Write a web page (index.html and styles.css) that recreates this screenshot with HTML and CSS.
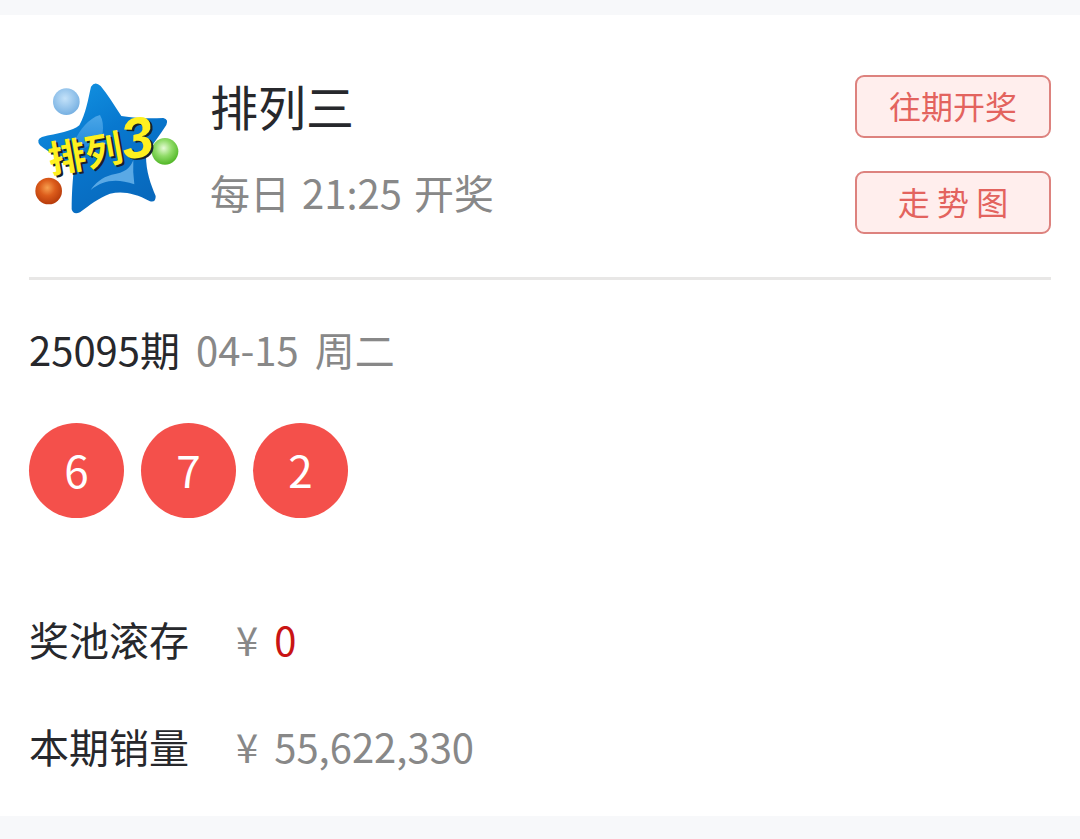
FILE: index.html
```
<!DOCTYPE html>
<html lang="zh">
<head>
    <meta charset="UTF-8">
    <meta name="viewport" content="width=device-width, initial-scale=1.0">
    <title>排列三</title>
    <link rel="stylesheet" href="styles.css">
</head>
<body>
    <main class="card">
        <header class="header">
            <svg class="logo" viewBox="27 0 456 465" aria-hidden="true">
                <defs>
                    <linearGradient id="star" x1="0" y1="0" x2="0.6" y2="1">
                        <stop offset="0" stop-color="#1599e6"/>
                        <stop offset="0.5" stop-color="#0878cf"/>
                        <stop offset="1" stop-color="#0869bd"/>
                    </linearGradient>
                    <linearGradient id="shine" x1="0" y1="0" x2="0" y2="1">
                        <stop offset="0" stop-color="#4ba6e8"/>
                        <stop offset="1" stop-color="#1683d6"/>
                    </linearGradient>
                    <radialGradient id="blue" cx="0.45" cy="0.38" r="0.6">
                        <stop offset="0" stop-color="#c4e2f9"/>
                        <stop offset="1" stop-color="#79b2e3"/>
                    </radialGradient>
                    <radialGradient id="green" cx="0.45" cy="0.38" r="0.6">
                        <stop offset="0" stop-color="#e6fbd6"/>
                        <stop offset="0.5" stop-color="#91dc69"/>
                        <stop offset="1" stop-color="#55b92b"/>
                    </radialGradient>
                    <radialGradient id="orange" cx="0.45" cy="0.38" r="0.6">
                        <stop offset="0" stop-color="#f7a04f"/>
                        <stop offset="0.5" stop-color="#dc5c1b"/>
                        <stop offset="1" stop-color="#b93d0c"/>
                    </radialGradient>
                </defs>
                <path fill="url(#star)" d="M213 50Q225 32 242 48C262 72 282 104 304 138C350 146 392 146 430 144Q447 148 439 165C420 196 396 224 378 256C378 306 392 342 407 378Q408 398 390 394C344 370 310 363 270 371C236 384 207 406 180 427Q160 436 155 418C155 370 158 330 162 294C130 270 90 250 60 226Q47 208 66 201C110 190 160 184 178 166C198 130 204 88 213 50Z"/>
                <path fill="url(#shine)" d="M240 135C205 145 180 180 165 210L150 260C180 240 225 225 248 190Q252 155 240 135Z"/>
                <path fill="#5aa9e5" d="M340 270C330 295 315 308 275 314C245 322 225 340 212 360C250 330 290 325 343 343Q338 305 340 270Z"/>
                <circle cx="139" cy="95" r="40" fill="url(#blue)"/>
                <circle cx="435" cy="244" r="40" fill="url(#green)"/>
                <circle cx="86" cy="363" r="40" fill="url(#orange)"/>
                <g transform="rotate(-10 240 230)">
                    <g class="logo-shadow">
                        <text class="logo-text" x="87" y="290">排列</text>
                        <text class="logo-number" x="312" y="288">3</text>
                    </g>
                    <g class="logo-front">
                        <text class="logo-text" x="81" y="284">排列</text>
                        <text class="logo-number" x="306" y="282">3</text>
                    </g>
                </g>
            </svg>
            <div class="intro">
                <h1>排列三</h1>
                <p><span>每日</span> <time>21:25</time> <span>开奖</span></p>
            </div>
            <nav class="actions">
                <button type="button">往期开奖</button>
                <button type="button">走 势 图</button>
            </nav>
        </header>

        <section class="draw">
            <h2>25095期 <time>04-15</time> <span>周二</span></h2>
            <ul class="balls">
                <li>6</li>
                <li>7</li>
                <li>2</li>
            </ul>
        </section>

        <dl class="totals">
            <dt>奖池滚存</dt>
            <dd><span>¥</span><strong>0</strong></dd>
            <dt>本期销量</dt>
            <dd><span>¥</span>55,622,330</dd>
        </dl>
    </main>
</body>
</html>
```

FILE: styles.css
```
* {
    box-sizing: border-box;
}
body {
    margin: 0;
    padding: 15px 0 23px;
    background-color: #f7f8fa;
    color: #27282c;
    font-family: "KaiTi", "STKaiti", "Noto Sans CJK SC", sans-serif;
    font-size: 40px;
    line-height: 60px;
}
h1, h2, p, ul, dl, dd {
    margin: 0;
    padding: 0;
    font-weight: inherit;
}
.card {
    background-color: #fff;
    padding: 52px 29px 40px;
}
.header {
    display: flex;
    align-items: flex-start;
    padding-bottom: 43px;
    border-bottom: 3px solid #e8e7e6;
}
.logo {
    width: 152px;
    height: 155px;
    margin-top: 3px;
    flex-shrink: 0;
}
.logo-text {
    font-family: "Noto Sans CJK SC", sans-serif;
    font-size: 112px;
    font-weight: 700;
}
.logo-number {
    font-family: "Liberation Sans", Arial, sans-serif;
    font-size: 172px;
    font-weight: bold;
    font-style: italic;
}
.logo-shadow {
    fill: #17212b;
}
.logo-front {
    fill: #fff01f;
}
.intro {
    flex: 1;
    padding-left: 29px;
    color: #888;
}
.intro h1 {
    margin: 2px 0 21px;
    color: #27282c;
    font-size: 48px;
    line-height: 72px;
}
.intro p {
    display: flex;
    gap: 12px;
}
.actions {
    display: flex;
    flex-direction: column;
    gap: 33px;
    width: 196px;
    padding-top: 8px;
}
.actions button {
    height: 63px;
    padding: 0 0 3px;
    border: 2px solid #dd827e;
    border-radius: 9px;
    background-color: #ffeeed;
    color: #e3635e;
    font-family: "Noto Sans CJK SC", sans-serif;
    font-size: 32px;
    cursor: pointer;
}
.draw {
    padding-top: 39px;
}
.draw h2 {
    display: flex;
    gap: 16px;
    font-size: 40px;
}
.draw time, .draw span {
    color: #888;
}
.balls {
    display: flex;
    gap: 17px;
    margin-top: 44px;
    list-style: none;
}
.balls li {
    display: flex;
    align-items: center;
    justify-content: center;
    width: 95px;
    height: 95px;
    padding-bottom: 4px;
    border-radius: 50%;
    background-color: #f4504b;
    color: #fff;
    font-size: 44px;
}
.totals {
    display: grid;
    grid-template-columns: 160px 1fr;
    gap: 47px;
    margin-top: 91px;
}
.totals dd {
    display: flex;
    gap: 16px;
    color: #888;
}
.totals strong {
    color: #c91414;
    font-weight: 400;
}
```
